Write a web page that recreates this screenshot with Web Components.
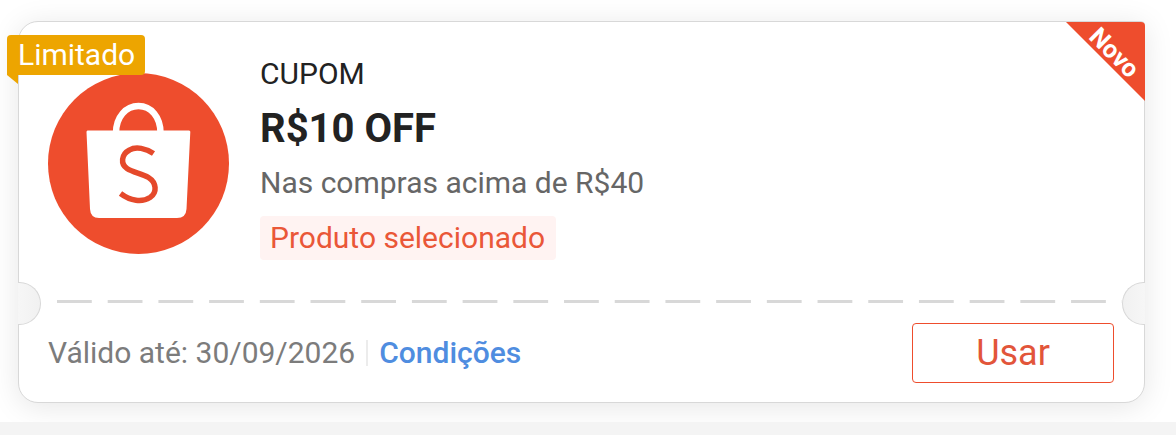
<!DOCTYPE html>
<html lang="pt-BR">
<head>
<meta charset="utf-8">
<meta name="viewport" content="width=device-width, initial-scale=1">
<title>Cupom</title>
<style>
    body {
        margin: 0;
        background: #f4f4f4;
        font-family: Roboto, "Liberation Sans", sans-serif;
        color: #222;
    }
    main {
        overflow: hidden;
        padding: 21px 31px 19px 18px;
        background: #fff;
    }
</style>
</head>
<body>
<main>
    <coupon-card>
        <coupon-flag slot="flag">Limitado</coupon-flag>
        <coupon-corner slot="corner">Novo</coupon-corner>
        <shop-logo slot="logo"></shop-logo>
        <span slot="kind">CUPOM</span>
        <span slot="title">R$10 OFF</span>
        <span slot="rule">Nas compras acima de R$40</span>
        <coupon-tag slot="tag">Produto selecionado</coupon-tag>
        <coupon-divider slot="divider"></coupon-divider>
        <coupon-footer slot="footer" href="#condicoes">
            Válido até: 30/09/2026
            <span slot="link">Condições</span>
            <span slot="action">Usar</span>
        </coupon-footer>
    </coupon-card>
</main>

<script>
// Yellow ribbon that folds behind the left edge of the card
class CouponFlag extends HTMLElement {
    constructor() {
        super();
        this.shadow = this.attachShadow({ mode: "open" });
        this.shadow.innerHTML = `
        <style>
            :host {
                display: block;
                color: #fff;
                font-size: 30px;
                line-height: 40px;
            }
            .label {
                padding: 0 10px 0 11px;
                border-radius: 4px 4px 4px 0;
                background: #eda500;
            }
            .fold {
                width: 11px;
                height: 9px;
                background: #eda500;
                clip-path: polygon(0 0, 100% 0, 100% 100%);
            }
        </style>
        <div class="label"><slot></slot></div>
        <div class="fold"></div>
        `;
    }
}

// Red triangle in the top right corner
class CouponCorner extends HTMLElement {
    constructor() {
        super();
        this.shadow = this.attachShadow({ mode: "open" });
        this.shadow.innerHTML = `
        <style>
            :host {
                display: grid;
                place-items: center;
                box-sizing: border-box;
                width: 79px;
                height: 79px;
                padding: 0 0 18px 18px;
                border-radius: 0 4px 0 0;
                background: #ee4d2d;
                clip-path: polygon(0 0, 100% 0, 100% 100%);
                color: #fff;
                font-size: 25px;
                font-weight: 700;
                line-height: 28px;
            }
            span {
                transform: rotate(45deg);
            }
        </style>
        <span><slot></slot></span>
        `;
    }
}

class ShopLogo extends HTMLElement {
    constructor() {
        super();
        this.shadow = this.attachShadow({ mode: "open" });
        this.shadow.innerHTML = `
        <style>
            :host {
                display: block;
                width: 181px;
                height: 181px;
            }
            svg {
                display: block;
            }
        </style>
        <svg width="181" height="181" viewBox="0 0 181 181" aria-hidden="true">
            <circle cx="90.500" cy="90.500" r="90.500" fill="#ee4d2d"/>
            <path d="M68 60C68 44 78 33 90.500 33S112.500 44 112.500 60" fill="none" stroke="#fff" stroke-width="6.500"/>
            <path d="M39.500 57.500H141Q142.500 57.500 142.300 59L138.500 136Q138 145 129 145H51Q42.500 145 42 136L38.500 59Q38.500 57.500 39.500 57.500Z" fill="#fff"/>
            <path d="M105.500 80.500C98 75.500 88 73 81.500 77C73 81.500 72.500 91 79 95.500C85 99.500 94 100.500 100.500 104.500C108.500 109.500 109.500 119.500 102 124.500C94 129.500 82.500 128 72.500 120.500" fill="none" stroke="#e5492b" stroke-width="5.500"/>
        </svg>
        `;
    }
}

class CouponTag extends HTMLElement {
    constructor() {
        super();
        this.shadow = this.attachShadow({ mode: "open" });
        this.shadow.innerHTML = `
        <style>
            :host {
                display: inline-block;
                padding: 0 11px 0 10px;
                border-radius: 4px;
                background: #fff3f2;
                color: #ea5738;
                font-size: 30px;
                line-height: 44px;
            }
        </style>
        <slot></slot>
        `;
    }
}

// Perforation: a notch on each side and a dashed line between them
class CouponDivider extends HTMLElement {
    constructor() {
        super();
        this.shadow = this.attachShadow({ mode: "open" });
        this.shadow.innerHTML = `
        <style>
            :host {
                display: flex;
                height: 38px;
                margin: 0 -1px;
            }
            .notch {
                box-sizing: border-box;
                flex: none;
                width: 23px;
                height: 43px;
                border: 1px solid #d8d8d8;
            }
            .left {
                border-left: 0;
                border-radius: 0 22px 22px 0;
                background: linear-gradient(90deg, #f6f6f6, #f1f1f1);
            }
            .right {
                border-right: 0;
                border-radius: 22px 0 0 22px;
                background: linear-gradient(270deg, #f6f6f6, #f1f1f1);
            }
            .dashes {
                flex: 1;
                align-self: center;
                height: 3px;
                margin-left: 16px;
                background: linear-gradient(90deg, #d8d8d8 69%, transparent 69%) 0 0 / 51px 3px round;
            }
        </style>
        <div class="notch left"></div>
        <div class="dashes"></div>
        <div class="notch right"></div>
        `;
    }
}

class CouponFooter extends HTMLElement {
    constructor() {
        super();
        this.shadow = this.attachShadow({ mode: "open" });
    }

    connectedCallback() {
        this.shadow.innerHTML = `
        <style>
            :host {
                display: flex;
                align-items: center;
                padding: 3px 30px 19px 29px;
                color: #7c7c7c;
                font-size: 30px;
                line-height: 36px;
            }
            .rule {
                width: 2px;
                height: 26px;
                margin: 0 11px;
                background: #ececec;
            }
            a {
                color: #4f8de0;
                font-weight: 500;
                text-decoration: none;
            }
            button {
                box-sizing: border-box;
                width: 202px;
                height: 60px;
                margin: 0 0 0 auto;
                padding: 0;
                border: 1px solid #ee4d2d;
                border-radius: 4px;
                background: #fff;
                color: #e2553a;
                font-family: inherit;
                font-size: 36px;
                line-height: 40px;
            }
        </style>
        <span><slot></slot></span>
        <div class="rule"></div>
        <a href="${this.getAttribute("href")}"><slot name="link"></slot></a>
        <button type="button"><slot name="action"></slot></button>
        `;
    }
}

class CouponCard extends HTMLElement {
    constructor() {
        super();
        this.shadow = this.attachShadow({ mode: "open" });
        this.shadow.innerHTML = `
        <style>
            :host {
                display: block;
                position: relative;
                border: 1px solid #d8d8d8;
                border-radius: 20px 4px 20px 20px;
                background: #fff;
                box-shadow: 0 4px 30px rgba(0, 0, 0, 0.1);
            }
            .body {
                display: flex;
                align-items: flex-start;
                gap: 31px;
                padding: 34px 29px 22px;
            }
            .logo {
                margin-top: 17px;
            }
            .kind, .rule {
                font-size: 30px;
                line-height: 36px;
            }
            .rule {
                margin-bottom: 15px;
                color: #666;
            }
            h2 {
                margin: 13px 0 12px;
                font-size: 40px;
                font-weight: 700;
                line-height: 48px;
            }
            .flag {
                position: absolute;
                top: 13px;
                left: -12px;
            }
            .corner {
                position: absolute;
                top: 0;
                right: -1px;
            }
        </style>
        <div class="body">
            <div class="logo"><slot name="logo"></slot></div>
            <div class="text">
                <div class="kind"><slot name="kind"></slot></div>
                <h2><slot name="title"></slot></h2>
                <div class="rule"><slot name="rule"></slot></div>
                <slot name="tag"></slot>
            </div>
        </div>
        <slot name="divider"></slot>
        <slot name="footer"></slot>
        <div class="flag"><slot name="flag"></slot></div>
        <div class="corner"><slot name="corner"></slot></div>
        `;
    }
}

customElements.define("coupon-flag", CouponFlag);
customElements.define("coupon-corner", CouponCorner);
customElements.define("shop-logo", ShopLogo);
customElements.define("coupon-tag", CouponTag);
customElements.define("coupon-divider", CouponDivider);
customElements.define("coupon-footer", CouponFooter);
customElements.define("coupon-card", CouponCard);
</script>
</body>
</html>
